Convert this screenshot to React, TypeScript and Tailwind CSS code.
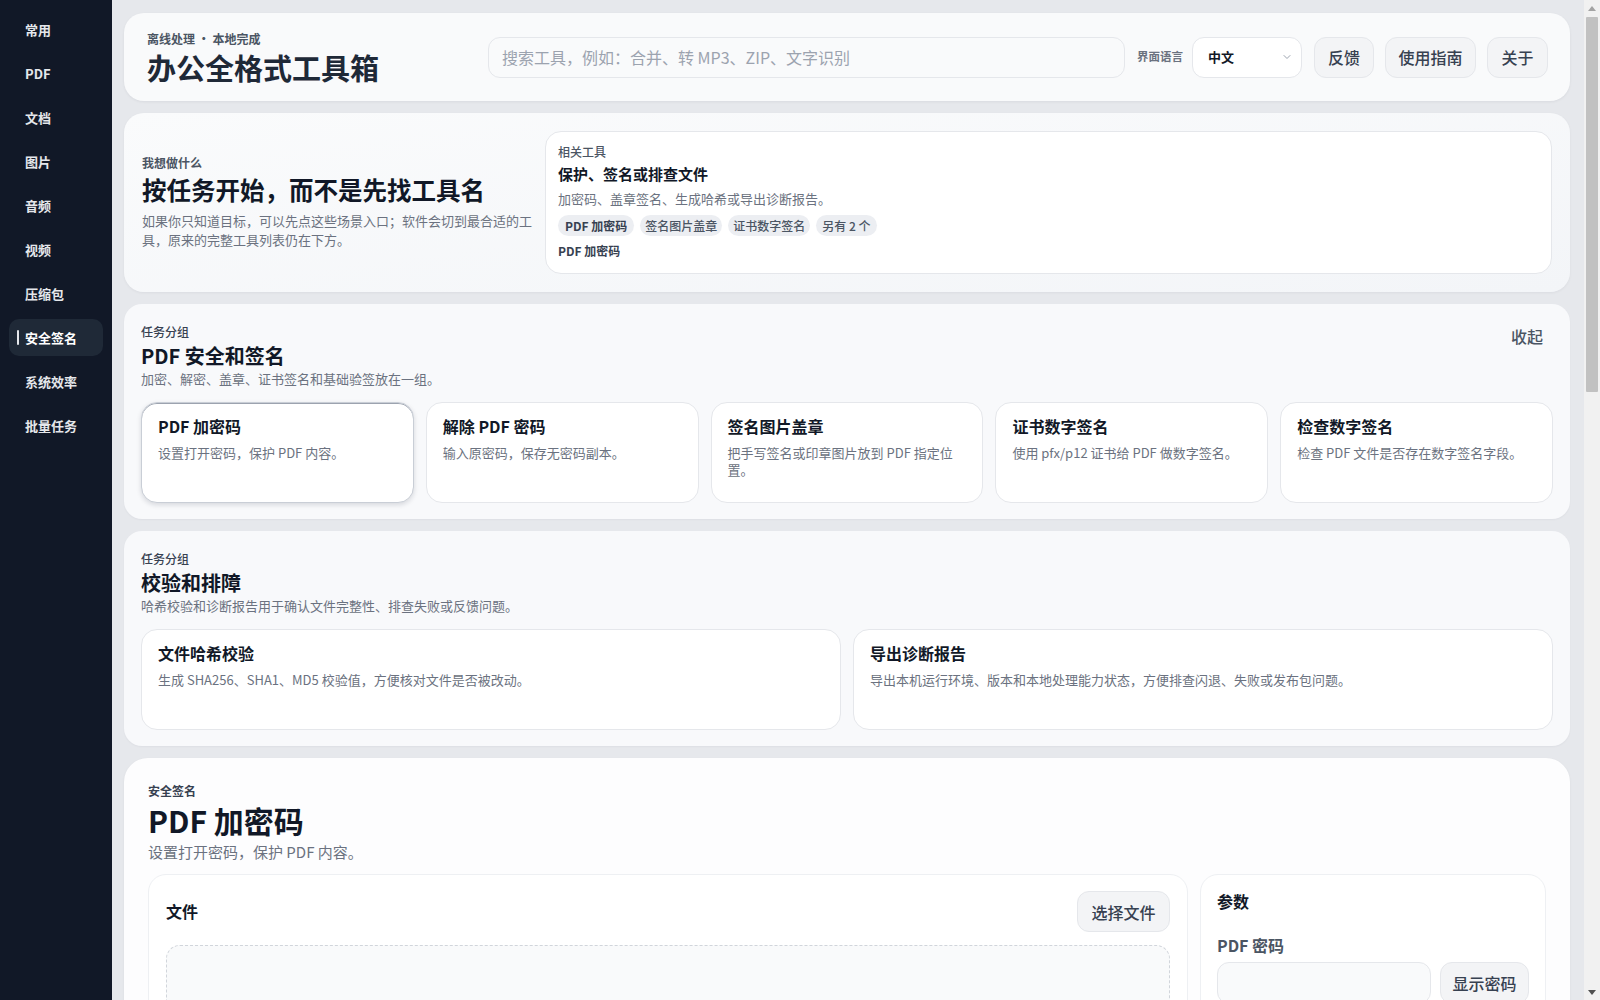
import React from "react";
import { ChevronDown } from "lucide-react";

const navItems = ["常用", "PDF", "文档", "图片", "音频", "视频", "压缩包", "安全签名", "系统效率", "批量任务"];

const securityTools = [
  { t: "PDF 加密码", d: "设置打开密码，保护 PDF 内容。", active: true },
  { t: "解除 PDF 密码", d: "输入原密码，保存无密码副本。" },
  { t: "签名图片盖章", d: "把手写签名或印章图片放到 PDF 指定位置。" },
  { t: "证书数字签名", d: "使用 pfx/p12 证书给 PDF 做数字签名。" },
  { t: "检查数字签名", d: "检查 PDF 文件是否存在数字签名字段。" },
];

const checkTools = [
  { t: "文件哈希校验", d: "生成 SHA256、SHA1、MD5 校验值，方便核对文件是否被改动。" },
  { t: "导出诊断报告", d: "导出本机运行环境、版本和本地处理能力状态，方便排查闪退、失败或发布包问题。" },
];

function ToolCard({ t, d, active }: { t: string; d: string; active?: boolean }) {
  return (
    <div
      className={
        "h-[101px] rounded-[16px] border px-4 pt-[11px] " +
        (active
          ? "bg-white border-[#c9ced6] shadow-[inset_0_1px_0_#9ca3af,0_2px_5px_rgba(15,23,42,0.14)]"
          : "bg-white border-[#e5e7eb]")
      }
    >
      <div className="text-[16px] leading-6 font-bold text-[#111827]">{t}</div>
      <div className="mt-[6px] text-[13px] leading-[17px] text-[#6b7280]">{d}</div>
    </div>
  );
}

function Section({
  title,
  desc,
  children,
  collapse,
}: {
  title: string;
  desc: string;
  children: React.ReactNode;
  collapse?: boolean;
}) {
  return (
    <section className="rounded-[18px] bg-[#f8f9fb] px-[17px] pt-[20px] pb-[16px] shadow-[0_1px_2px_rgba(15,23,42,0.04)]">
      <div className="flex items-start justify-between">
        <div>
          <div className="text-[12px] leading-4 font-medium text-[#374151]">任务分组</div>
          <div className="mt-[2px] text-[20px] leading-7 font-bold text-[#111827]">{title}</div>
          <div className="text-[13px] leading-[18px] text-[#6b7280]">{desc}</div>
        </div>
        {collapse && (
          <button className="px-[10px] text-[16px] leading-6 font-medium text-[#4b5563]">收起</button>
        )}
      </div>
      <div className="mt-[14px]">{children}</div>
    </section>
  );
}

export default function App() {
  return (
    <div className="flex h-[1000px] w-[1600px] overflow-hidden bg-[#e6e8ec] font-['Noto_Sans_CJK_SC','Noto_Sans',sans-serif]">
      {/* Sidebar */}
      <aside className="flex w-[112px] shrink-0 flex-col gap-[7px] bg-[#111827] pt-[11px]">
        {navItems.map((n) => {
          const active = n === "安全签名";
          return (
            <div
              key={n}
              className={
                "relative mx-[9px] flex h-[37px] items-center rounded-[10px] pl-[16px] text-[13px] font-bold " +
                (active ? "bg-[#1f2937] text-white" : "text-[#e5e7eb]")
              }
            >
              {active && <span className="absolute left-[8px] top-[11px] h-[15px] w-[2px] rounded bg-[#e5e7eb]" />}
              {n}
            </div>
          );
        })}
      </aside>

      {/* Main */}
      <main className="flex min-w-0 flex-1 flex-col gap-[12px] overflow-hidden pl-[12px] pr-[14px] pt-[13px]">
        {/* Header */}
        <header className="flex h-[88px] shrink-0 items-center gap-[12px] rounded-[20px] bg-[#f9fafb] pl-[23px] pr-[22px] shadow-[0_1px_3px_rgba(15,23,42,0.06)]">
          <div className="w-[329px] shrink-0">
            <div className="text-[12px] leading-4 font-bold text-[#4b5563]">离线处理 · 本地完成</div>
            <div className="mt-[3px] text-[29px] leading-[34px] font-bold text-[#1f2937]">办公全格式工具箱</div>
          </div>
          <div className="flex h-[41px] min-w-0 flex-1 items-center rounded-[12px] border border-[#e5e7eb] bg-[#f9fafb] pl-[13px] text-[16px] text-[#9ca3af]">
            搜索工具，例如：合并、转 MP3、ZIP、文字识别
          </div>
          <div className="flex items-center gap-[9px]">
            <span className="whitespace-nowrap text-[11.5px] font-bold text-[#6b7280]">界面语言</span>
            <div className="flex h-[41px] w-[110px] items-center justify-between rounded-[12px] border border-[#e5e7eb] bg-white pl-[15px] pr-[8px]">
              <span className="text-[13px] font-bold text-[#111827]">中文</span>
              <ChevronDown size={12} className="text-[#9ca3af]" />
            </div>
          </div>
          <div className="flex items-center gap-[11px]">
            <button className="h-[41px] w-[60px] rounded-[12px] border border-[#e5e7eb] bg-[#f3f4f6] text-[16px] font-medium text-[#374151]">反馈</button>
            <button className="h-[41px] w-[91px] rounded-[12px] border border-[#e5e7eb] bg-[#f3f4f6] text-[16px] font-medium text-[#374151]">使用指南</button>
            <button className="h-[41px] w-[61px] rounded-[12px] border border-[#e5e7eb] bg-[#f3f4f6] text-[16px] font-medium text-[#374151]">关于</button>
          </div>
        </header>

        {/* Hero */}
        <section className="flex h-[179px] shrink-0 gap-[13px] rounded-[20px] bg-gradient-to-br from-[#fafbfc] to-[#f3f5f8] p-[18px] shadow-[0_1px_3px_rgba(15,23,42,0.05)]">
          <div className="flex w-[390px] shrink-0 flex-col justify-center pb-[2px]">
            <div className="text-[12px] leading-4 font-bold text-[#4b5563]">我想做什么</div>
            <div className="mt-[3px] text-[24.5px] leading-8 font-bold text-[#111827]">按任务开始，而不是先找工具名</div>
            <div className="mt-[5px] text-[13px] leading-[19px] text-[#6b7280]">
              如果你只知道目标，可以先点这些场景入口；软件会切到最合适的工具，原来的完整工具列表仍在下方。
            </div>
          </div>
          <div className="flex-1 rounded-[16px] border border-[#e5e7eb] bg-white px-[12px] pt-[12px]">
            <div className="text-[12px] leading-4 font-medium text-[#4b5563]">相关工具</div>
            <div className="mt-[3px] text-[15px] leading-[22px] font-bold text-[#111827]">保护、签名或排查文件</div>
            <div className="mt-[5px] text-[13px] leading-[18px] text-[#6b7280]">加密码、盖章签名、生成哈希或导出诊断报告。</div>
            <div className="mt-[7px] flex gap-[6px]">
              <span className="flex h-[21px] items-center rounded-full bg-[#eceef2] px-[7px] text-[12px] font-bold text-[#374151]">PDF 加密码</span>
              <span className="flex h-[21px] items-center rounded-full bg-[#eceef2] px-[5px] text-[12px] font-medium text-[#4b5563]">签名图片盖章</span>
              <span className="flex h-[21px] items-center rounded-full bg-[#eceef2] px-[5px] text-[12px] font-medium text-[#4b5563]">证书数字签名</span>
              <span className="flex h-[21px] items-center rounded-full bg-[#eceef2] px-[6px] text-[12px] font-medium text-[#4b5563]">另有 2 个</span>
            </div>
            <div className="mt-[7px] text-[12px] leading-4 font-bold text-[#374151]">PDF 加密码</div>
          </div>
        </section>

        <div className="shrink-0">
          <Section title="PDF 安全和签名" desc="加密、解密、盖章、证书签名和基础验签放在一组。" collapse>
            <div className="grid grid-cols-5 gap-3">
              {securityTools.map((x) => (
                <ToolCard key={x.t} {...x} />
              ))}
            </div>
          </Section>
        </div>

        <div className="shrink-0">
          <Section title="校验和排障" desc="哈希校验和诊断报告用于确认文件完整性、排查失败或反馈问题。">
            <div className="grid grid-cols-2 gap-3">
              {checkTools.map((x) => (
                <ToolCard key={x.t} {...x} />
              ))}
            </div>
          </Section>
        </div>

        {/* Tool workspace */}
        <section className="shrink-0 rounded-[24px] bg-[#fdfdfe] px-[24px] pt-[25px] pb-[24px] shadow-[0_1px_3px_rgba(15,23,42,0.05)]">
          <div className="text-[12px] leading-4 font-bold text-[#374151]">安全签名</div>
          <div className="mt-[3px] text-[30px] leading-9 font-bold text-[#111827]">PDF 加密码</div>
          <div className="mt-[3px] text-[15px] leading-[22px] text-[#6b7280]">设置打开密码，保护 PDF 内容。</div>
          <div className="mt-[11px] grid grid-cols-[1fr_346px] gap-[12px]">
            <div className="rounded-[18px] border border-[#eef0f3] bg-white px-[17px] pt-[16px] pb-[17px]">
              <div className="flex items-center justify-between">
                <span className="-mt-[1px] text-[16px] font-semibold text-[#111827]">文件</span>
                <button className="h-[41px] w-[93px] rounded-[12px] border border-[#e5e7eb] bg-[#f3f4f6] text-[16px] font-medium text-[#374151]">选择文件</button>
              </div>
              <div className="mt-[13px] h-[220px] rounded-[14px] border border-dashed border-[#d1d5db] bg-[#f9fafb]" />
            </div>
            <div className="rounded-[18px] border border-[#eef0f3] bg-white px-[16px] pt-[14px] pb-[17px]">
              <div className="text-[16px] leading-6 font-semibold text-[#111827]">参数</div>
              <div className="mt-[20px] text-[16px] leading-6 font-bold text-[#4b5563]">PDF 密码</div>
              <div className="mt-[5px] flex gap-[9px]">
                <div className="h-[42px] flex-1 rounded-[12px] border border-[#e5e7eb] bg-[#f9fafb]" />
                <button className="h-[42px] w-[89px] rounded-[12px] border border-[#e5e7eb] bg-[#f3f4f6] text-[16px] font-medium text-[#374151]">显示密码</button>
              </div>
            </div>
          </div>
        </section>
      </main>

      {/* Scrollbar */}
      <div className="flex w-[16px] shrink-0 flex-col bg-[#f1f1f1]">
        <div className="flex h-[16px] items-center justify-center">
          <div className="h-0 w-0 border-x-[4px] border-b-[5px] border-x-transparent border-b-[#a3a3a3]" />
        </div>
        <div className="mx-[2px] mt-[1px] h-[375px] rounded-[1px] bg-[#c1c1c1]" />
        <div className="flex-1" />
        <div className="flex h-[16px] items-center justify-center">
          <div className="h-0 w-0 border-x-[4px] border-t-[5px] border-x-transparent border-t-[#505050]" />
        </div>
      </div>
    </div>
  );
}
